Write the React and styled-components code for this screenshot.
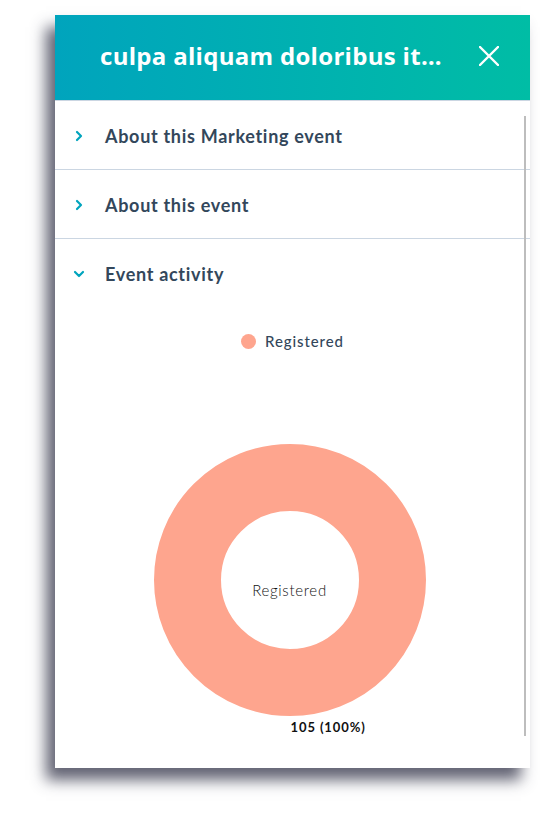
import React from "react";
import styled, { createGlobalStyle } from "styled-components";

const GlobalStyle = createGlobalStyle`
  html, body {
    margin: 0;
    padding: 0;
    background: #ffffff;
  }
  body {
    font-family: Lato, "Liberation Sans", sans-serif;
  }
`;

// CSS
const Page = styled.div`
  width: 540px;
  height: 820px;
  padding: 15px 10px 0 55px;
  box-sizing: border-box;
`;

const Panel = styled.div`
  width: 475px;
  height: 753px;
  background: #ffffff;
  display: flex;
  flex-direction: column;
  box-shadow: -9px 12px 14px rgba(70, 72, 90, 0.85);
  position: relative;
`;

const Header = styled.div`
  height: 86px;
  flex-shrink: 0;
  display: flex;
  align-items: center;
  justify-content: space-between;
  padding: 0 30px 4px 45px;
  box-sizing: border-box;
  background: linear-gradient(to right, #00a4bd, #00bda5);
  border-bottom: 1px solid #cbd6e2;
`;

const Title = styled.h1`
  margin: 0;
  font-family: "Open Sans", Lato, sans-serif;
  font-size: 24px;
  font-weight: 700;
  color: #ffffff;
  letter-spacing: 0.3px;
  white-space: nowrap;
  overflow: hidden;
  text-overflow: ellipsis;
  max-width: 354px;
`;

const CloseButton = styled.button`
  border: none;
  background: none;
  padding: 0;
  width: 22px;
  height: 22px;
  display: flex;
  align-items: center;
  justify-content: center;
  cursor: pointer;
`;

const Body = styled.div`
  flex: 1;
  overflow: hidden;
  position: relative;
`;

const ScrollThumb = styled.div`
  position: absolute;
  right: 4px;
  top: 15px;
  width: 2px;
  height: 620px;
  background: #bdbdbd;
`;

const Section = styled.div`
  border-bottom: ${(p) => (p.$open ? "none" : "1px solid #cbd6e2")};
`;

const SectionHeader = styled.div`
  height: 68px;
  display: flex;
  align-items: center;
  padding-left: 18px;
  padding-top: 2px;
  box-sizing: border-box;
`;

const ChevronBox = styled.span`
  width: 32px;
  display: flex;
  align-items: center;
`;

const SectionTitle = styled.span`
  font-size: 18px;
  font-weight: 700;
  color: #33475b;
  letter-spacing: 0.7px;
`;

const ChartArea = styled.div`
  display: flex;
  flex-direction: column;
  align-items: center;
  padding-top: 25px;
  padding-right: 6px;
`;

const Legend = styled.div`
  display: flex;
  align-items: center;
  gap: 9px;
  padding-left: 6px;
`;

const LegendDot = styled.span`
  width: 15px;
  height: 15px;
  border-radius: 50%;
  background: ${(p) => p.$color};
`;

const LegendLabel = styled.span`
  font-size: 15px;
  font-weight: 500;
  color: #33475b;
  letter-spacing: 0.9px;
`;

const DonutWrap = styled.div`
  margin-top: 94px;
  width: 272px;
  height: 272px;
  position: relative;
`;

const DonutCenter = styled.div`
  position: absolute;
  inset: 0;
  display: flex;
  align-items: center;
  justify-content: center;
  padding-top: 20px;
  font-size: 15px;
  font-weight: 300;
  color: #111111;
  letter-spacing: 0.7px;
`;

const ValueLabel = styled.div`
  width: 272px;
  padding-left: 137px;
  box-sizing: border-box;
  margin-top: 3px;
  font-size: 13px;
  font-weight: 700;
  color: #111111;
  letter-spacing: 0.9px;
`;

function Chevron({ open }) {
  return (
    <svg width="12" height="12" viewBox="0 0 12 12">
      <path
        d={open ? "M2 4 L6 8 L10 4" : "M4 2 L8 6 L4 10"}
        fill="none"
        stroke="#00a4bd"
        strokeWidth="2.2"
        strokeLinecap="round"
        strokeLinejoin="round"
      />
    </svg>
  );
}

const sections = [
  { id: "marketing", title: "About this Marketing event", open: false },
  { id: "about", title: "About this event", open: false },
  { id: "activity", title: "Event activity", open: true },
];

function Donut() {
  return (
    <DonutWrap>
      <svg width="272" height="272" viewBox="0 0 272 272">
        <circle cx="136" cy="136" r="102.5" fill="none" stroke="#fea58e" strokeWidth="67" />
      </svg>
      <DonutCenter>Registered</DonutCenter>
    </DonutWrap>
  );
}

export default function App() {
  return (
    <>
      <GlobalStyle />
      <Page>
        <Panel>
          <Header>
            <Title>culpa aliquam doloribus itaque</Title>
            <CloseButton aria-label="Close">
              <svg width="20" height="20" viewBox="0 0 20 20">
                <path d="M1 1 L19 19 M19 1 L1 19" stroke="#ffffff" strokeWidth="2.4" strokeLinecap="round" />
              </svg>
            </CloseButton>
          </Header>
          <Body>
            <ScrollThumb />
            {sections.map((s) => (
              <Section key={s.id} $open={s.open}>
                <SectionHeader>
                  <ChevronBox>
                    <Chevron open={s.open} />
                  </ChevronBox>
                  <SectionTitle>{s.title}</SectionTitle>
                </SectionHeader>
                {s.open ? (
                  <ChartArea>
                    <Legend>
                      <LegendDot $color="#fea58e" />
                      <LegendLabel>Registered</LegendLabel>
                    </Legend>
                    <Donut />
                    <ValueLabel>105 (100%)</ValueLabel>
                  </ChartArea>
                ) : (
                  ""
                )}
              </Section>
            ))}
          </Body>
        </Panel>
      </Page>
    </>
  );
}
